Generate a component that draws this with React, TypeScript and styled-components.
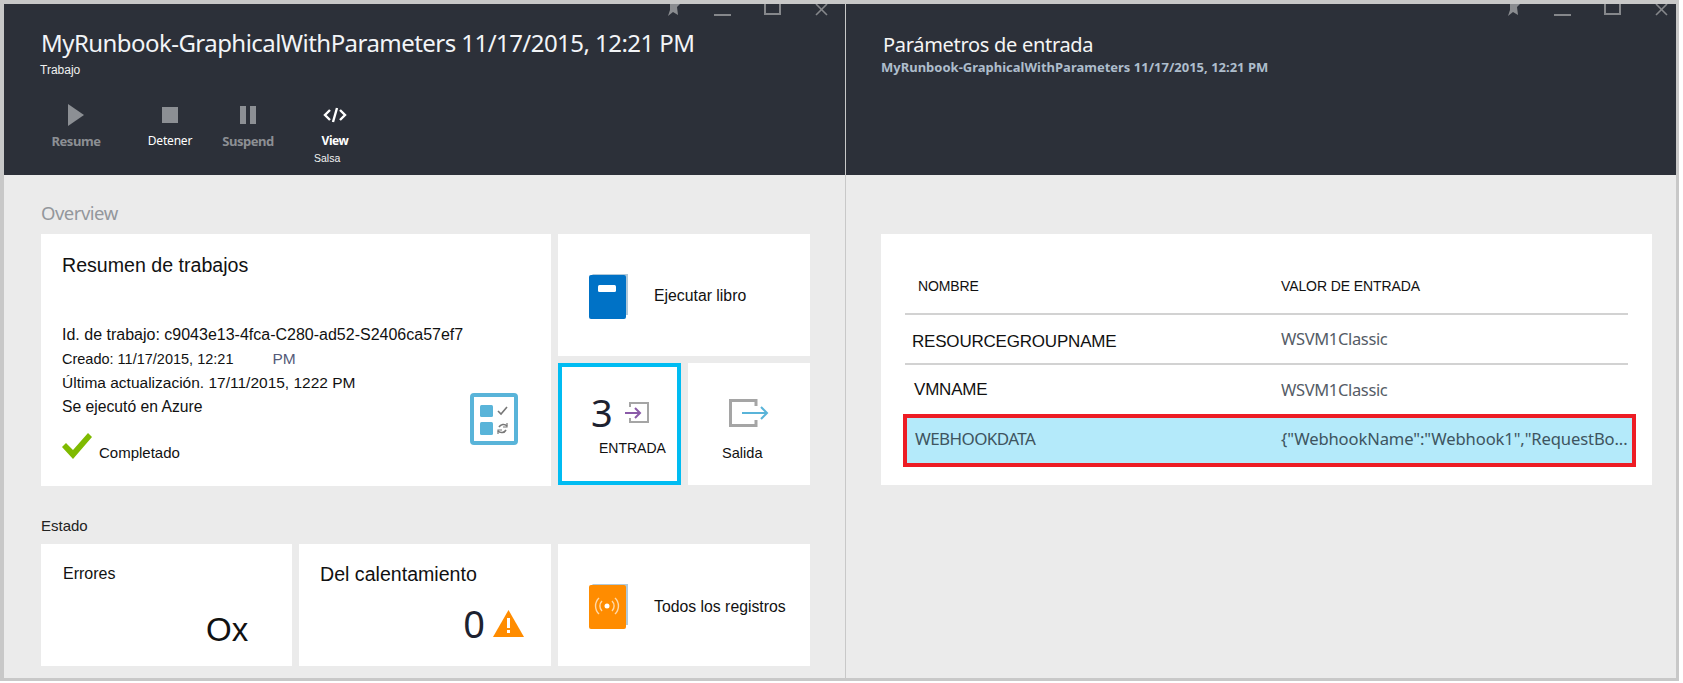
import * as React from 'react'
import styled, { createGlobalStyle } from 'styled-components'

const Global = createGlobalStyle`
  html, body {
    margin: 0;
    padding: 0;
    background: #fff;
    font-family: "Liberation Sans", Arial, sans-serif;
  }
  * {
    box-sizing: border-box;
  }
`

const Page = styled.div`
  width: 1683px;
  height: 683px;
  overflow: hidden;
`

const Frame = styled.div`
  width: 1679px;
  height: 681px;
  border: 3px solid #c8c8c8;
  border-top-width: 4px;
  border-left-width: 4px;
  display: grid;
  grid-template-columns: 841px 831px;
`

const Blade = styled.section<{ $divided?: boolean }>`
  display: flex;
  flex-direction: column;
  min-width: 0;
  position: relative;
  border-left: ${props => (props.$divided ? '1px solid #c8c8c8' : '0')};
`

const Header = styled.header`
  height: 171px;
  flex: none;
  background: #2c3039;
  color: #fff;
  overflow: hidden;
`

const HeaderTitle = styled.h1`
  margin: 25px 0 0 37px;
  font: 400 24px/28px "Noto Sans", "Open Sans", sans-serif;
  letter-spacing: -0.55px;
  color: #f2f4f7;
  white-space: nowrap;
`

const HeaderSub = styled.div`
  margin: 6px 0 0 36px;
  font: 400 12px/14px "Liberation Sans", sans-serif;
  color: #f0f0f0;
`

const SideTitle = styled.h2`
  margin: 29px 0 0 37px;
  font: 400 20px/24px "Noto Sans", sans-serif;
  letter-spacing: -0.3px;
  color: #f5f5f5;
`

const SideSub = styled.div`
  margin: 3px 0 0 35px;
  font: 700 13px/14px "Noto Sans", sans-serif;
  letter-spacing: 0;
  color: #aebdcc;
  white-space: nowrap;
`

const Toolbar = styled.div`
  display: flex;
  margin: 26px 0 0 25px;
`

const ToolButton = styled.div<{ $width: number }>`
  width: ${props => props.$width}px;
  display: flex;
  flex-direction: column;
  align-items: center;
  height: 50px;
`

const ToolIcon = styled.div`
  height: 24px;
  display: flex;
  align-items: center;
  justify-content: center;
`

const ToolLabel = styled.div<{ $tone: 'muted' | 'plain' | 'strong' }>`
  margin-top: 6px;
  font: ${props => (props.$tone === 'plain' ? 400 : 700)} ${props => (props.$tone === 'muted' ? 13 : 12)}px/16px "Noto Sans", sans-serif;
  letter-spacing: ${props => (props.$tone === 'plain' ? '-0.2px' : '-0.45px')};
  color: ${props => (props.$tone === 'muted' ? '#8c8f94' : '#fff')};
`

const Salsa = styled.div`
  margin: -1px 0 0 310px;
  font: 400 10.5px/13px "Liberation Sans", sans-serif;
  color: #f2f2f2;
`

const Controls = styled.div<{ $left: number }>`
  position: absolute;
  top: 0;
  left: ${props => props.$left}px;
  display: flex;
`

const Body = styled.div`
  flex: 1;
  min-height: 0;
  background: #ebebeb;
`

const LeftBody = styled(Body)`
  padding: 25px 0 0 37px;
`

const SectionLabel = styled.div<{ $muted?: boolean }>`
  height: ${props => (props.$muted ? '34px' : '59px')};
  padding-top: ${props => (props.$muted ? '3px' : '31px')};
  font: 400 ${props => (props.$muted ? '18.5px' : '15px')}/20px
    ${props => (props.$muted ? '"Noto Sans"' : '"Liberation Sans"')}, sans-serif;
  letter-spacing: ${props => (props.$muted ? '-0.5px' : '0')};
  color: ${props => (props.$muted ? '#93979c' : '#222')};
`

const TileGrid = styled.div`
  display: grid;
  grid-template-columns: 251px 252px 123px 122px;
  grid-auto-rows: 122px;
  gap: 7px;
  width: 769px;
`

const Tile = styled.div<{ $span?: number; $rows?: number }>`
  background: #fff;
  grid-column: span ${props => props.$span ?? 1};
  grid-row: span ${props => props.$rows ?? 1};
  color: #111;
  min-width: 0;
`

const JobTile = styled(Tile)`
  padding: 20px 0 0 21px;
  height: 252px;
`

const JobTitle = styled.div`
  font: 400 19.6px/22px "Liberation Sans", sans-serif;
`

const JobFooter = styled.div`
  display: flex;
  justify-content: space-between;
  align-items: flex-end;
  margin-top: 47px;
  padding-right: 33px;
`

const JobLine = styled.div<{ $size: number }>`
  font-size: ${props => props.$size}px;
  line-height: 24px;
  white-space: nowrap;
`

const LateStamp = styled.span`
  margin-left: 39px;
  color: #555a78;
  font-size: 15.5px;
`

const StatusRow = styled.div`
  display: flex;
  align-items: flex-end;
  gap: 7px;
  margin-top: 14px;
  font-size: 15px;
  line-height: 16px;
`

const StatusText = styled.span`
  margin-bottom: -2px;
`

const TaskIcon = styled.svg`
  margin-bottom: 14px;
  flex: none;
`

const LinkTile = styled(Tile)<{ $drop?: number }>`
  display: flex;
  align-items: center;
  gap: 25px;
  padding: ${props => props.$drop ?? 2}px 0 0 31px;
  font-size: 15.8px;
`

const InputTile = styled(Tile)`
  border: 4px solid #00bcf2;
  padding: 26px 0 0 29px;
`

const InputTop = styled.div`
  display: flex;
  align-items: center;
  gap: 12px;
  height: 38px;
`

const BigNumber = styled.div<{ $size?: number }>`
  font: 400 ${props => props.$size ?? 38}px/38px "Noto Sans", sans-serif;
  color: #1d2230;
`

const TileCaption = styled.div`
  margin: 9px 0 0 8px;
  font-size: 14px;
  line-height: 16px;
`

const OutputTile = styled(Tile)`
  padding: 36px 0 0 41px;
`

const OutputCaption = styled.div`
  margin: 14px 0 0 -7px;
  font-size: 14.6px;
  line-height: 16px;
`

const StatTile = styled(Tile)`
  display: flex;
  flex-direction: column;
  padding-top: 21px;
`

const StatTitle = styled.div<{ $size: number; $left: number }>`
  margin-left: ${props => props.$left}px;
  font-size: ${props => props.$size}px;
  line-height: 18px;
`

const StatValue = styled.div`
  display: flex;
  justify-content: flex-end;
  align-items: center;
  gap: 8px;
  margin-top: 21px;
  padding-right: 27px;
`

const ErrorValue = styled.div`
  margin: 28px 0 0 165px;
  font-size: 33px;
  line-height: 38px;
`

const RightBody = styled(Body)`
  padding: 59px 0 0 35px;
`

const TableCard = styled.div`
  width: 771px;
  height: 251px;
  background: #fff;
  padding-top: 27px;
`

const Row = styled.div<{ $height: number; $ruled?: boolean }>`
  display: grid;
  grid-template-columns: 376px 1fr;
  align-items: center;
  height: ${props => props.$height}px;
  margin: 0 24px 0 24px;
  border-bottom: ${props => (props.$ruled ? '2px solid #d2d2d2' : '0')};
`

const SelectedRow = styled.div`
  display: grid;
  grid-template-columns: 374px 1fr;
  align-items: center;
  height: 53px;
  margin: 0 16px 0 22px;
  padding-bottom: 4px;
  background: #b4eafa;
  border: 4px solid #ed1c24;
`

const HeadCell = styled.div<{ $left?: number }>`
  padding: 0 0 2px ${props => props.$left ?? 0}px;
  font: 400 14px/16px "Liberation Sans", sans-serif;
  letter-spacing: -0.1px;
  color: #111;
`

const NameCell = styled.div<{ $left?: number; $low?: boolean }>`
  padding: ${props => (props.$low ? '5px' : '0')} 0 0 ${props => props.$left ?? 0}px;
  font: 400 17px/20px "Liberation Sans", sans-serif;
  letter-spacing: -0.2px;
  color: #111;
`

const ValueCell = styled.div`
  font: 400 16.5px/20px "Noto Sans", sans-serif;
  letter-spacing: -0.35px;
  color: #555c66;
  white-space: nowrap;
`

const SelectedName = styled(NameCell)`
  font: 400 17px/20px "Noto Sans", sans-serif;
  letter-spacing: -0.6px;
  color: #3e5560;
`

const SelectedValue = styled(ValueCell)`
  color: #3e5560;
  letter-spacing: -0.12px;
  font-size: 16.6px;
`

const WindowControls = ({ left }: { left: number }) => (
  <Controls $left={left}>
    <svg width="206" height="16" viewBox="0 0 206 16" fill="none">
      <path d="M7 0h10l-3 3 1 8-5-3-5 4 2-6z" fill="#8a8c90" />
      <path d="M51 11h17" stroke="#85878b" strokeWidth="2" />
      <path d="M102 0v10h15V0" stroke="#85878b" strokeWidth="2" />
      <path d="M153 0l11 11M164 0l-11 11" stroke="#85878b" strokeWidth="1.6" />
    </svg>
  </Controls>
)

const CheckTile = () => (
  <TaskIcon width="48" height="52" viewBox="0 0 48 52">
    <rect x="2" y="2" width="44" height="48" rx="2" fill="#fff" stroke="#59b4d9" strokeWidth="4" />
    <rect x="10" y="12" width="13" height="12" rx="1.500" fill="#59b4d9" />
    <rect x="10" y="29" width="13" height="13" rx="1.500" fill="#59b4d9" />
    <path d="M28 18l3 3 6-7" fill="none" stroke="#777" strokeWidth="1.6" />
    <path d="M37 33a5 5 0 0 0-8 1M28 38a5 5 0 0 0 8-1" fill="none" stroke="#777" strokeWidth="1.6" />
    <path d="M37 30v4h-4M28 41v-4h4" fill="none" stroke="#777" strokeWidth="1.2" />
  </TaskIcon>
)

const Book = ({ color, children }: { color: string; children: React.ReactNode }) => (
  <svg width="40" height="45" viewBox="0 0 40 45">
    <path d="M3 0h36v41h-3z" fill="#9dbbd0" opacity="0.8" />
    <rect x="0" y="1" width="37" height="44" rx="2" fill={color} />
    {children}
  </svg>
)

export default function App() {
  return (
    <Page>
      <Global />
      <Frame>
        <Blade>
          <Header>
            <HeaderTitle>MyRunbook-GraphicalWithParameters 11/17/2015, 12:21 PM</HeaderTitle>
            <HeaderSub>Trabajo</HeaderSub>
            <Toolbar>
              <ToolButton $width={94}>
                <ToolIcon>
                  <svg width="18" height="22" viewBox="0 0 18 22"><path d="M1 0l16 11L1 22z" fill="#8c8f94" /></svg>
                </ToolIcon>
                <ToolLabel $tone="muted">Resume</ToolLabel>
              </ToolButton>
              <ToolButton $width={94}>
                <ToolIcon>
                  <svg width="16" height="16" viewBox="0 0 16 16"><rect width="16" height="16" fill="#8c8f94" /></svg>
                </ToolIcon>
                <ToolLabel $tone="plain">Detener</ToolLabel>
              </ToolButton>
              <ToolButton $width={62}>
                <ToolIcon>
                  <svg width="16" height="18" viewBox="0 0 16 18">
                    <rect width="6" height="18" fill="#8c8f94" />
                    <rect x="10" width="6" height="18" fill="#8c8f94" />
                  </svg>
                </ToolIcon>
                <ToolLabel $tone="muted">Suspend</ToolLabel>
              </ToolButton>
              <ToolButton $width={112}>
                <ToolIcon>
                  <svg width="24" height="16" viewBox="0 0 24 16" fill="none" stroke="#fff" strokeWidth="2.4">
                    <path d="M7 3L2 8l5 5M17 3l5 5-5 5M14 1l-4 14" />
                  </svg>
                </ToolIcon>
                <ToolLabel $tone="strong">View</ToolLabel>
              </ToolButton>
            </Toolbar>
            <Salsa>Salsa</Salsa>
          </Header>
          <WindowControls left={659} />
          <LeftBody>
            <SectionLabel $muted>Overview</SectionLabel>
            <TileGrid>
              <JobTile $span={2} $rows={2}>
                <JobTitle>Resumen de trabajos</JobTitle>
                <JobFooter>
                  <div>
                    <JobLine $size={16}>Id. de trabajo: c9043e13-4fca-C280-ad52-S2406ca57ef7</JobLine>
                    <JobLine $size={14.5}>
                      Creado: 11/17/2015, 12:21<LateStamp>PM</LateStamp>
                    </JobLine>
                    <JobLine $size={15.5}>Última actualización. 17/11/2015, 1222 PM</JobLine>
                    <JobLine $size={15.7}>Se ejecutó en Azure</JobLine>
                    <StatusRow>
                      <svg width="30" height="26" viewBox="0 0 30 26">
                        <path d="M0 14l4-4 7 7L26 0l4 4-19 22z" fill="#7fba00" />
                      </svg>
                      <StatusText>Completado</StatusText>
                    </StatusRow>
                  </div>
                  <CheckTile />
                </JobFooter>
              </JobTile>
              <LinkTile $span={2}>
                <Book color="#0072c6">
                  <rect x="9" y="11" width="18" height="7" rx="1.5" fill="#fff" />
                </Book>
                Ejecutar libro
              </LinkTile>
              <InputTile>
                <InputTop>
                  <BigNumber>3</BigNumber>
                  <svg width="24" height="21" viewBox="0 0 24 21" fill="none">
                    <path d="M5 5V1h18v19H5v-4" stroke="#a5a5a5" strokeWidth="2" />
                    <path d="M0 11h15M10 6l5 5-5 5" stroke="#8a5aa8" strokeWidth="2" />
                  </svg>
                </InputTop>
                <TileCaption>ENTRADA</TileCaption>
              </InputTile>
              <OutputTile>
                <svg width="40" height="28" viewBox="0 0 40 28" fill="none">
                  <path d="M27 7V1.500H1.500v25H27V21" stroke="#a5a5a5" strokeWidth="3" />
                  <path d="M13 14h25M32 8l6 6-6 6" stroke="#59b4d9" strokeWidth="2" />
                </svg>
                <OutputCaption>Salida</OutputCaption>
              </OutputTile>
            </TileGrid>
            <SectionLabel>Estado</SectionLabel>
            <TileGrid>
              <StatTile>
                <StatTitle $size={16} $left={22}>Errores</StatTitle>
                <ErrorValue>Ox</ErrorValue>
              </StatTile>
              <StatTile>
                <StatTitle $size={19.6} $left={21}>Del calentamiento</StatTitle>
                <StatValue>
                  <BigNumber>0</BigNumber>
                  <svg width="31" height="28" viewBox="0 0 31 28">
                    <path d="M15.500 1L31 28H0z" fill="#ff8c00" />
                    <rect x="14" y="9" width="3" height="10" fill="#fff" />
                    <rect x="14" y="21" width="3" height="3" fill="#fff" />
                  </svg>
                </StatValue>
              </StatTile>
              <LinkTile $span={2} $drop={3}>
                <Book color="#ff8c00">
                  <circle cx="18" cy="22" r="2.500" fill="#fff" />
                  <path
                    d="M13 17a7 7 0 0 0 0 10M23 17a7 7 0 0 1 0 10M10 14a11 11 0 0 0 0 16M26 14a11 11 0 0 1 0 16"
                    fill="none"
                    stroke="#ffd9a8"
                    strokeWidth="1.400"
                  />
                </Book>
                Todos los registros
              </LinkTile>
            </TileGrid>
          </LeftBody>
        </Blade>
        <Blade $divided>
          <Header>
            <SideTitle>Parámetros de entrada</SideTitle>
            <SideSub>MyRunbook-GraphicalWithParameters 11/17/2015, 12:21 PM</SideSub>
          </Header>
          <WindowControls left={657} />
          <RightBody>
            <TableCard>
              <Row $height={54} $ruled>
                <HeadCell $left={13}>NOMBRE</HeadCell>
                <HeadCell>VALOR DE ENTRADA</HeadCell>
              </Row>
              <Row $height={50} $ruled>
                <NameCell $left={7} $low>RESOURCEGROUPNAME</NameCell>
                <ValueCell>WSVM1Classic</ValueCell>
              </Row>
              <Row $height={49}>
                <NameCell $left={9}>VMNAME</NameCell>
                <ValueCell>WSVM1Classic</ValueCell>
              </Row>
              <SelectedRow>
                <SelectedName $left={8}>WEBHOOKDATA</SelectedName>
                <SelectedValue>{'{"WebhookName":"Webhook1","RequestBo...'}</SelectedValue>
              </SelectedRow>
            </TableCard>
          </RightBody>
        </Blade>
      </Frame>
    </Page>
  )
}
